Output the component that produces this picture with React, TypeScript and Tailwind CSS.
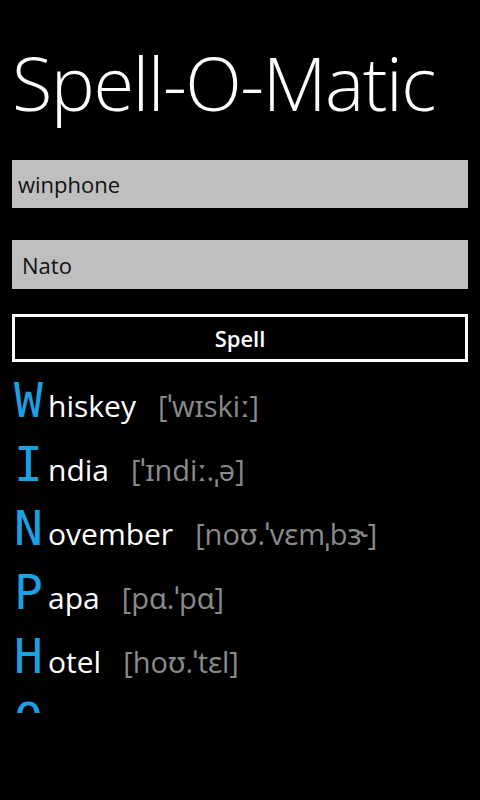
import { useState } from 'react';

const NATO: Record<string, [string, string]> = {
  W: ['hiskey', "[ˈwɪskiː]"],
  I: ['ndia', "[ˈɪndiː.ˌə]"],
  N: ['ovember', "[noʊ.ˈvɛmˌbɝ]"],
  P: ['apa', "[pɑ.ˈpɑ]"],
  H: ['otel', "[hoʊ.ˈtɛl]"],
  O: ['scar', "[ˈɑs.kɚ]"],
  E: ['cho', "[ˈɛk.oʊ]"],
};

export default function App() {
  const [word, setWord] = useState('winphone');
  const [alphabet, setAlphabet] = useState('Nato');
  const letters = word.toUpperCase().split('');

  return (
    <div
      className="w-[480px] h-[800px] bg-black text-white overflow-hidden"
      style={{ fontFamily: '"Open Sans", "Noto Sans", sans-serif' }}
    >
      <h1 className="pl-[12px] pt-[36px] text-[74px] font-light leading-[94px] tracking-[-1.5px]">
        Spell-O-Matic
      </h1>

      <div className="px-[12px] mt-[30px] flex flex-col">
        <input
          value={word}
          onChange={(e) => setWord(e.target.value)}
          className="h-[48px] bg-[#bfbfbf] text-[#111] text-[22px] px-[6px] outline-none"
        />
        <input
          value={alphabet}
          onChange={(e) => setAlphabet(e.target.value)}
          className="h-[49px] mt-[32px] bg-[#bfbfbf] text-[#111] text-[22px] px-[10px] outline-none"
        />
        <button className="h-[48px] mt-[25px] border-[3px] border-white text-[22px] font-semibold">
          Spell
        </button>
      </div>

      {/* scroll area, last row is cut like in the app */}
      <div className="mt-[6px] h-[345px] overflow-hidden px-[14px]">
        {letters.map((l, i) => {
          const entry = NATO[l] ?? ['', ''];
          return (
            <div key={i} className="flex items-baseline h-[64px]">
              <span
                className="w-[34px] text-[#1ba1e2] text-[48px] leading-[64px]"
                style={{ fontFamily: '"DejaVu Sans Mono", monospace' }}
              >
                {l}
              </span>
              <span className="text-[30px]">{entry[0]}</span>
              <span className="ml-[22px] text-[29px] text-[#8a8a8a]">{entry[1]}</span>
            </div>
          );
        })}
      </div>
    </div>
  );
}
